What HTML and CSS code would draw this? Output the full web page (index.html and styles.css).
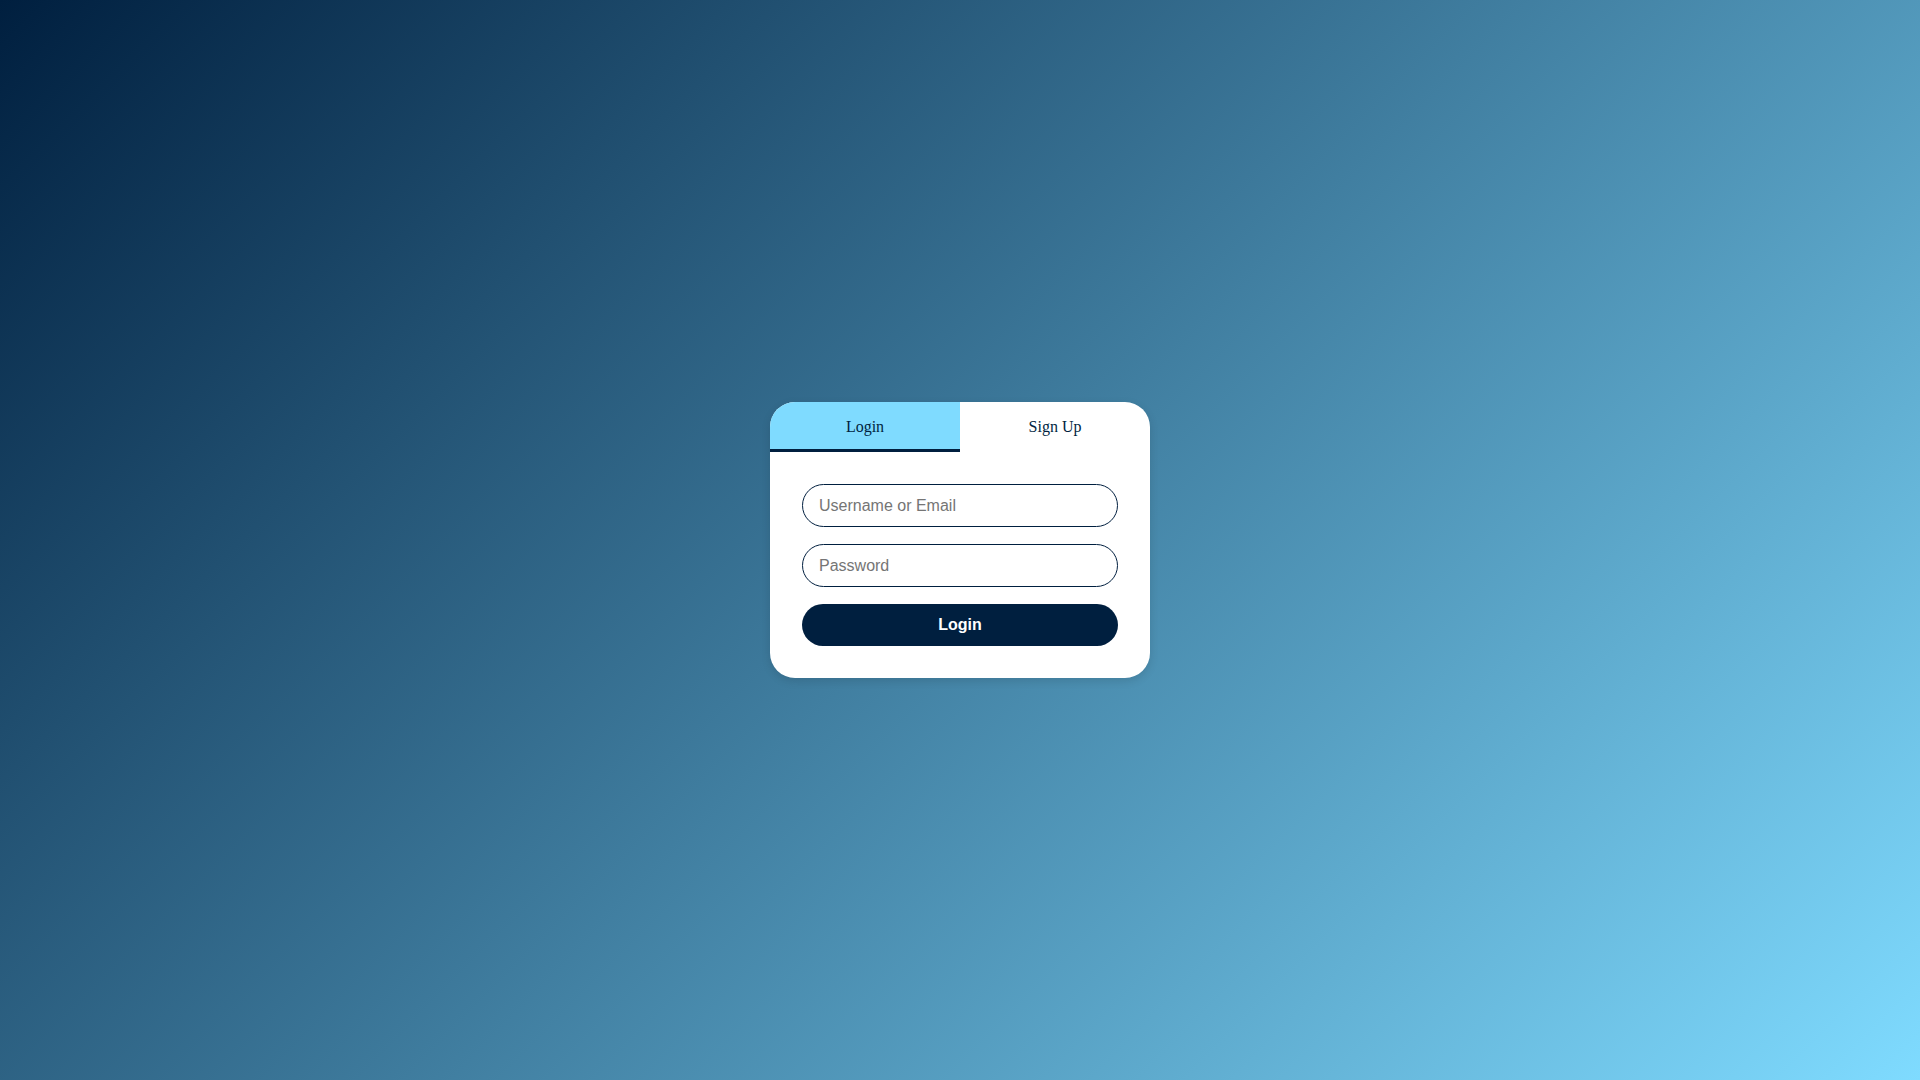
FILE: index.html
```
<!DOCTYPE html>
<html lang="en">
<head>
<meta charset="utf-8">
<title>Login</title>
<link rel="stylesheet" href="styles.css">
</head>
<body>
<div class="card">
  <div class="tabs">
    <div class="tab active">Login</div>
    <div class="tab">Sign Up</div>
  </div>
  <form class="form">
    <input class="field" type="text" placeholder="Username or Email">
    <input class="field" type="password" placeholder="Password">
    <button class="submit" type="button">Login</button>
  </form>
</div>
</body>
</html>
```
FILE: styles.css
```
html, body {
  margin: 0;
  height: 100%;
}
body {
  background: linear-gradient(135deg, #001f3f 0%, #7fdbff 100%);
  display: flex;
  align-items: center;
  justify-content: center;
  font-family: "Liberation Serif", serif;
}
.card {
  width: 380px;
  background: #fff;
  border-radius: 25px;
  overflow: hidden;
  box-shadow: 0 3px 10px rgba(0, 0, 0, 0.12);
}
.tabs {
  display: flex;
}
.tab {
  flex: 1;
  height: 50px;
  box-sizing: border-box;
  display: flex;
  align-items: center;
  justify-content: center;
  padding-top: 2px;
  font-size: 16px;
  color: #001f3f;
  border-bottom: 3px solid transparent;
}
.tab.active {
  background: #7fdbff;
  border-bottom-color: #001f3f;
}
.form {
  margin: 0;
  padding: 32px 32px 32px;
  display: flex;
  flex-direction: column;
  gap: 17px;
}
.field {
  box-sizing: border-box;
  height: 43px;
  width: 100%;
  border: 1px solid #001f3f;
  border-radius: 22px;
  padding: 0 16px;
  font-family: "Liberation Sans", Arial, sans-serif;
  font-size: 16px;
  color: #001f3f;
  background: #fff;
  outline: none;
}
.field::placeholder {
  color: #757575;
}
.submit {
  height: 42px;
  border: none;
  border-radius: 21px;
  background: #001f3f;
  color: #fff;
  font-family: "Liberation Sans", Arial, sans-serif;
  font-size: 16px;
  font-weight: bold;
  cursor: pointer;
}
```
